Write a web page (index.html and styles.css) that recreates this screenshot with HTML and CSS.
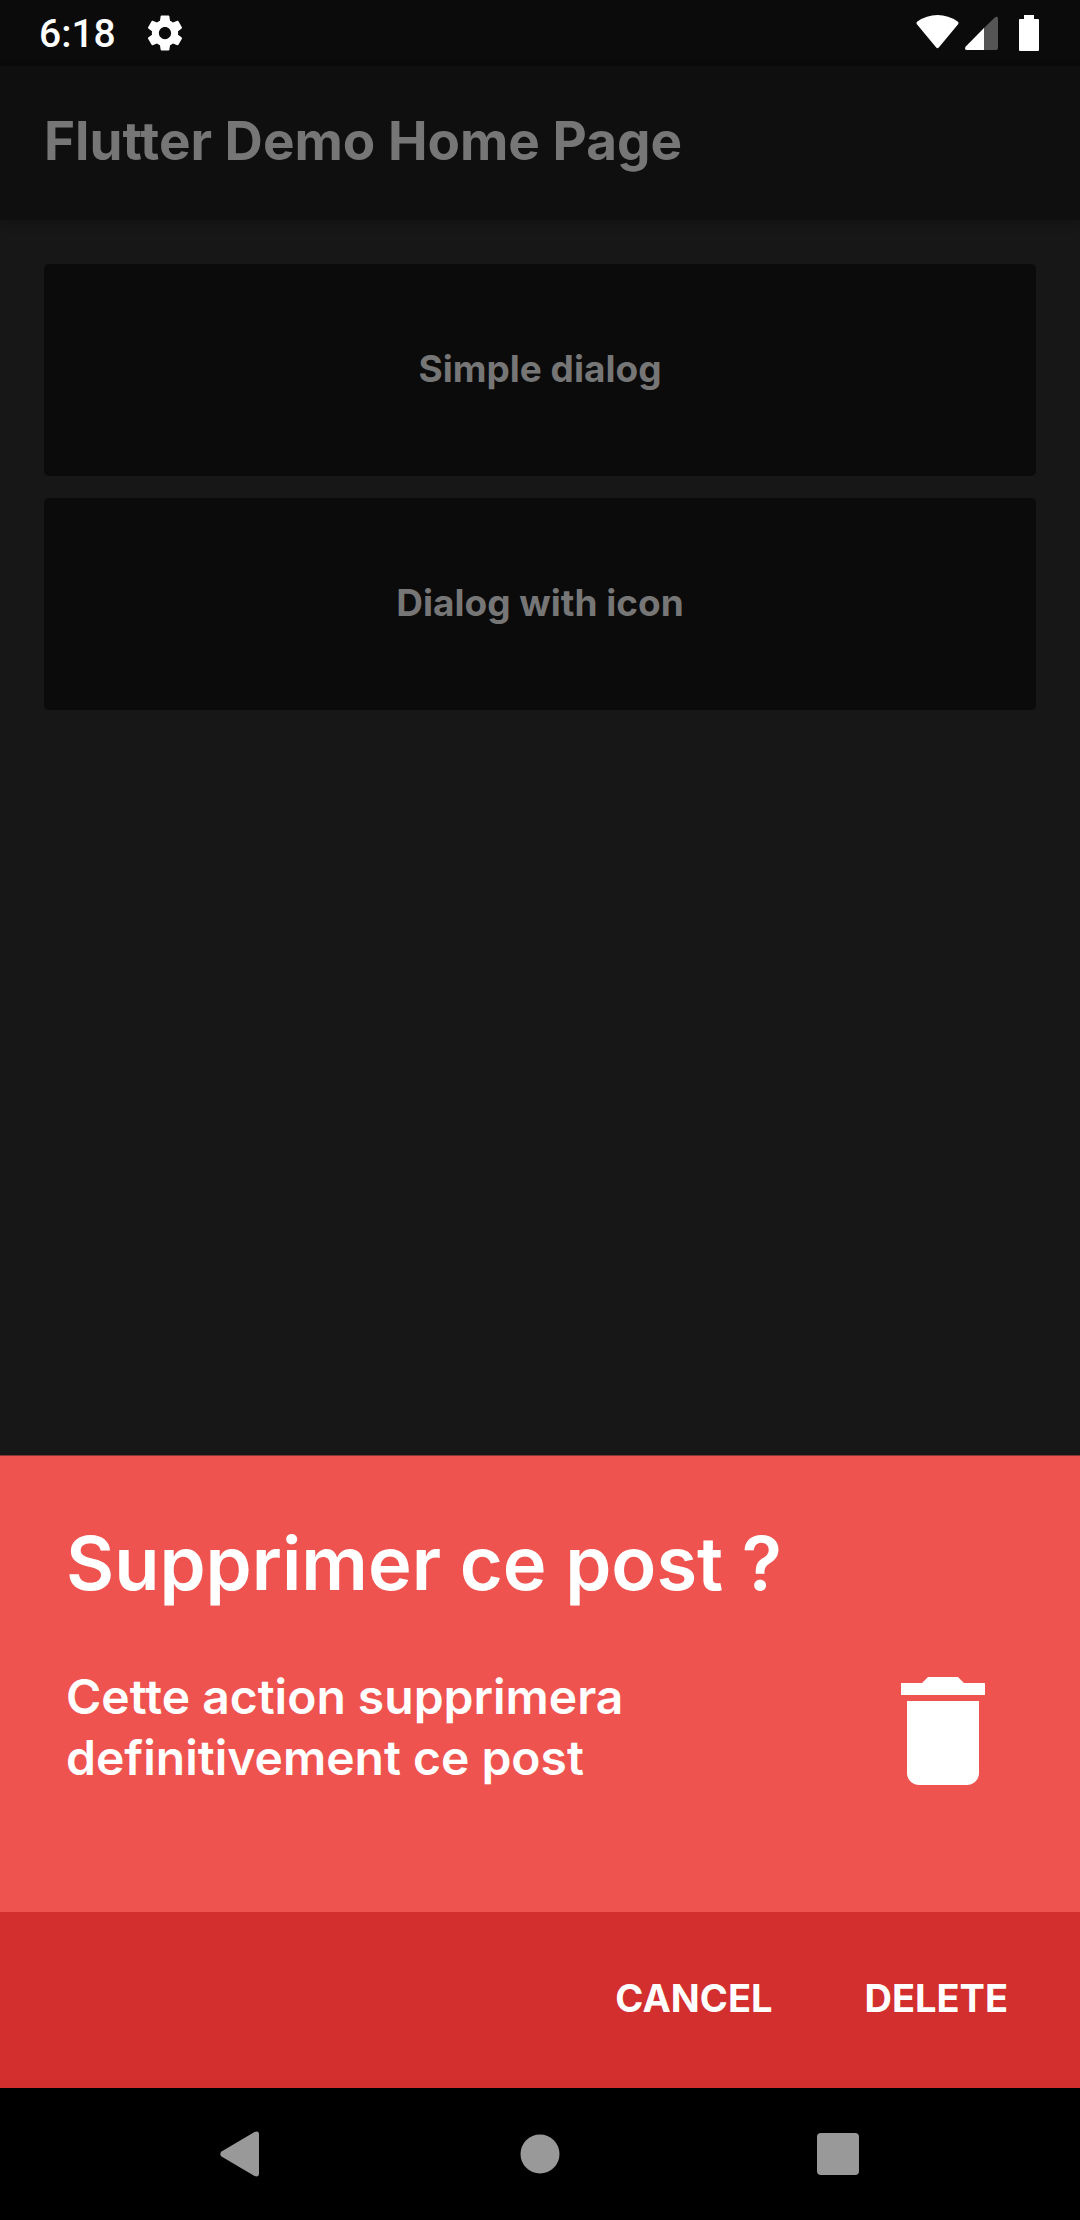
FILE: index.html
```
<!DOCTYPE html>
<html lang="fr">
<head>
  <meta charset="utf-8">
  <meta name="viewport" content="width=device-width, initial-scale=1">
  <title>Flutter Demo Home Page</title>
  <link rel="stylesheet" href="styles.css">
</head>
<body>
  <div class="status-bar">
    <span class="clock">6:18</span>
    <svg class="status-gear" viewBox="0 0 24 24" aria-hidden="true"><path d="M19.43 12.98c.04-.32.07-.64.07-.98s-.03-.66-.07-.98l2.11-1.65c.19-.15.24-.42.12-.64l-2-3.46c-.12-.22-.39-.3-.61-.22l-2.49 1c-.52-.4-1.08-.73-1.69-.98l-.38-2.65C14.46 2.18 14.25 2 14 2h-4c-.25 0-.46.18-.49.42l-.38 2.65c-.61.25-1.17.59-1.69.98l-2.49-1c-.23-.09-.49 0-.61.22l-2 3.46c-.13.22-.07.49.12.64l2.11 1.65c-.04.32-.07.65-.07.98s.03.66.07.98l-2.11 1.65c-.19.15-.24.42-.12.64l2 3.46c.12.22.39.3.61.22l2.49-1c.52.4 1.08.73 1.69.98l.38 2.65c.03.24.24.42.49.42h4c.25 0 .46-.18.49-.42l.38-2.65c.61-.25 1.17-.59 1.69-.98l2.49 1c.23.09.49 0 .61-.22l2-3.46c.12-.22.07-.49-.12-.64l-2.11-1.65zM12 15.5c-1.93 0-3.5-1.57-3.5-3.5s1.57-3.5 3.5-3.5 3.5 1.57 3.5 3.5-1.57 3.5-3.5 3.5z"/></svg>
    <svg class="status-signals" viewBox="0 0 124 36" aria-hidden="true">
      <path d="M.9 9.2Q-.2 7.6 1.4 6.5Q10.500 0 21.500 0Q32.500 0 41.600 6.500Q43.200 7.600 42.100 9.200L22.800 32.600Q21.500 34 20.200 32.600z"/>
      <path class="faded" d="M67 14 78.500 2.700Q82 .5 82 4V33Q82 35 80 35H67z"/>
      <path d="M68 13V35H51Q48 35 49.500 31.800z"/>
      <path d="M108 0h10v4h4q1 0 1 1v30q0 1-1 1h-18q-1 0-1-1V5q0-1 1-1h4z"/>
    </svg>
  </div>

  <header class="app-bar">
    <h1 class="app-title">Flutter Demo Home Page</h1>
  </header>

  <main class="content">
    <button class="tile" type="button">Simple dialog</button>
    <button class="tile" type="button">Dialog with icon</button>
  </main>

  <section class="sheet" role="dialog" aria-labelledby="sheet-title" aria-describedby="sheet-text">
    <div class="sheet-body">
      <h2 class="sheet-title" id="sheet-title">Supprimer ce post ?</h2>
      <div class="sheet-row">
        <p class="sheet-text" id="sheet-text">Cette action supprimera definitivement ce post</p>
        <svg class="sheet-icon" viewBox="0 0 24 24" aria-hidden="true"><path d="M6 19c0 1.1.9 2 2 2h8c1.100 0 2-.9 2-2V7H6v12zM19 4h-3.500l-1-1h-5l-1 1H5v2h14V4z"/></svg>
      </div>
    </div>
    <div class="sheet-actions">
      <button class="action" type="button">CANCEL</button>
      <button class="action" type="button">DELETE</button>
    </div>
  </section>

  <nav class="nav-bar">
    <button class="nav-button" type="button" aria-label="Back"><svg class="nav-icon" viewBox="0 0 80 80"><path d="M19.500 42.500Q17 40 19.500 37.500L52.500 18Q57 16.500 57 20V60Q57 63.500 52.500 62z"/></svg></button>
    <button class="nav-button" type="button" aria-label="Home"><svg class="nav-icon" viewBox="0 0 80 80"><circle cx="40" cy="40" r="19.500"/></svg></button>
    <button class="nav-button" type="button" aria-label="Recent apps"><svg class="nav-icon" viewBox="0 0 80 80"><rect x="19" y="19" width="42" height="42" rx="4"/></svg></button>
  </nav>
</body>
</html>
```
FILE: styles.css
```
* {
  box-sizing: border-box;
}

body {
  margin: 0;
  min-height: 100vh;
  display: flex;
  flex-direction: column;
  background: #171717;
  color: #fff;
  font-family: Inter, "Liberation Sans", sans-serif;
  font-weight: 700;
}

h1,
h2,
p {
  margin: 0;
  font-weight: inherit;
}

button {
  border: 0;
  padding: 0;
  background: none;
  color: inherit;
  font: inherit;
  cursor: pointer;
}

svg {
  display: block;
  fill: currentColor;
  flex: none;
}

.status-bar {
  display: flex;
  align-items: center;
  height: 66px;
  padding: 0 40px 0 39px;
  background: #0b0b0b;
}

.clock {
  padding-top: 2px;
  font: 500 39px/44px Roboto, sans-serif;
}

.status-gear {
  width: 42px;
  height: 42px;
  margin-left: 28px;
}

.status-signals {
  width: 124px;
  height: 36px;
  margin-left: auto;
}

.faded {
  fill: #555;
}

.app-bar {
  padding: 42px 44px 46px;
  background: #0f0f0f;
  color: #767676;
  box-shadow: 0 4px 10px rgba(0, 0, 0, 0.2);
}

.app-title {
  font-size: 53px;
  line-height: 66px;
}

.content {
  flex: 1;
  display: flex;
  flex-direction: column;
  gap: 22px;
  padding: 44px;
}

.tile {
  padding: 81px 24px 83px;
  border-radius: 5px;
  background: #0b0b0b;
  color: #767676;
  font-size: 37px;
  line-height: 48px;
}

.sheet-body {
  padding: 63px 65px 109px 66px;
  border-top: 1px solid #863735;
  background: #ef5350;
  font-weight: 600;
}

.sheet-title {
  font-size: 74px;
  line-height: 88px;
}

.sheet-row {
  display: flex;
  align-items: center;
  justify-content: space-between;
  margin-top: 52px;
}

.sheet-text {
  padding-bottom: 8px;
  font-size: 48px;
  line-height: 61px;
}

.sheet-icon {
  width: 144px;
  height: 144px;
}

.sheet-actions {
  display: flex;
  justify-content: flex-end;
  gap: 4px;
  padding: 20px 28px 24px;
  background: #d32f2f;
}

.action {
  padding: 42px 44px;
  font-size: 38px;
  line-height: 48px;
}

.nav-bar {
  display: flex;
  justify-content: center;
  padding: 26px 0;
  background: #000;
}

.nav-button {
  flex: 0 1 298px;
  display: flex;
  justify-content: center;
  color: #999;
}

.nav-icon {
  width: 80px;
  height: 80px;
}
```
